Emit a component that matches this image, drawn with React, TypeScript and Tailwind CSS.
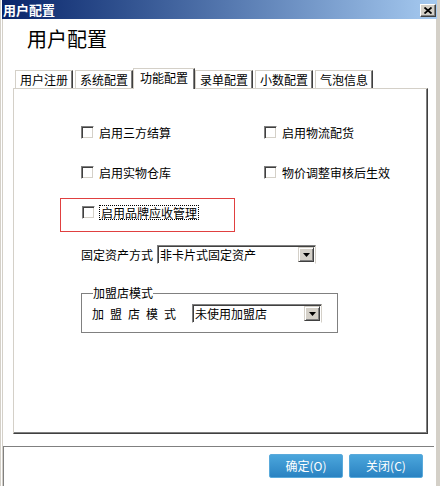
import React from "react";

function Box() {
  return (
    <span className="inline-block w-[13px] h-[13px] shrink-0 bg-white border border-t-[#808080] border-l-[#808080] border-b-white border-r-white shadow-[inset_1px_1px_0_#404040,inset_-1px_-1px_0_#d4d0c8]" />
  );
}

function Check({ label, focus }: { label: string; focus?: boolean }) {
  return (
    <div className="flex items-center h-[20px] gap-[4px]">
      <Box />
      <span
        className={
          focus
            ? "border border-dotted border-black px-[1px] leading-[13px]"
            : "px-[1px] leading-[13px]"
        }
      >
        {label}
      </span>
    </div>
  );
}

function Arrow() {
  return (
    <span className="ml-auto w-[16px] h-[15px] shrink-0 flex items-center justify-center bg-[#d4d0c8] border border-t-[#d4d0c8] border-l-[#d4d0c8] border-r-[#404040] border-b-[#404040] shadow-[inset_1px_1px_0_#ffffff,inset_-1px_-1px_0_#808080]">
      <svg width="7" height="4" viewBox="0 0 7 4">
        <polygon points="0,0 7,0 3.5,4" fill="#000" />
      </svg>
    </span>
  );
}

function Select({ text, wide }: { text: string; wide?: boolean }) {
  return (
    <div
      className={
        (wide ? "w-[159px] " : "w-[130px] ") +
        "h-[19px] flex items-center bg-white border border-t-[#808080] border-l-[#808080] border-b-white border-r-[#d4d0c8] shadow-[inset_1px_1px_0_#404040] pl-[2px] pr-[1px]"
      }
    >
      <span className="leading-[14px]">{text}</span>
      <Arrow />
    </div>
  );
}

function Tab({ label, active }: { label: string; active?: boolean }) {
  return (
    <div className="w-[60px] flex items-end">
      {active ? (
        <div className="relative z-10 -ml-[2px] -mb-[1px] w-[62px] h-[21px] bg-white border-t border-l border-[#d4d0c8] border-r border-r-[#404040] shadow-[inset_-1px_0_0_#808080] flex items-start justify-center pt-[1px]">
          <span className="leading-[16px]">{label}</span>
        </div>
      ) : (
        <div className="w-[58px] h-[18px] bg-white border-t border-l border-[#d4d0c8] border-r border-r-[#404040] shadow-[inset_-1px_0_0_#808080] flex items-center justify-center">
          <span className="leading-[14px]">{label}</span>
        </div>
      )}
    </div>
  );
}

export default function App() {
  return (
    <div className="w-[440px] h-[486px] bg-[#d4d0c8] flex text-[12px] text-black font-['Noto_Sans_CJK_SC','Noto_Sans',sans-serif] overflow-hidden">
      <div className="w-[1px] bg-[#d4d0c8]" />
      <div className="flex-1 flex flex-col border-l border-white pr-[3px]">
        {/* title bar */}
        <div className="h-[19px] shrink-0 bg-linear-to-r from-[#0a246a] to-[#a6caf0] flex items-center justify-between pl-[1px] pr-[1px]">
          <span className="text-white font-bold text-[13px] leading-none">用户配置</span>
          <span className="w-[16px] h-[13px] mt-[1px] flex items-center justify-center bg-[#d4d0c8] border border-t-white border-l-white border-r-[#404040] border-b-[#404040] shadow-[inset_-1px_-1px_0_#808080]">
            <svg width="8" height="7" viewBox="0 0 8 7">
              <path d="M0.5 0.5 L7.5 6.5 M7.5 0.5 L0.5 6.5" stroke="#000" strokeWidth="1.8" />
            </svg>
          </span>
        </div>
        {/* body */}
        <div className="flex-1 ml-[1px] mr-[1px] bg-white flex flex-col">
          <div className="pl-[24px] pt-[8px] text-[20px] leading-[24px]">用户配置</div>
          <div className="mt-[18px] h-[19px] pl-[12px] flex items-end">
            <Tab label="用户注册" />
            <Tab label="系统配置" />
            <Tab label="功能配置" active />
            <Tab label="录单配置" />
            <Tab label="小数配置" />
            <Tab label="气泡信息" />
          </div>
          <div className="ml-[10px] mr-[8px] h-[346px] border-t border-l border-[#d4d0c8] border-r border-b border-r-[#404040] border-b-[#404040] shadow-[inset_-1px_-1px_0_#808080] pl-[46px] pt-[33px] flex flex-col items-start">
            <div className="ml-[21px] grid grid-cols-[183px_auto] gap-y-[20px]">
              <Check label="启用三方结算" />
              <Check label="启用物流配货" />
              <Check label="启用实物仓库" />
              <Check label="物价调整审核后生效" />
            </div>
            <div className="mt-[16px] w-[175px] h-[34px] border border-[#e04040] pl-[21px] pt-[3px]">
              <Check label="启用品牌应收管理" focus />
            </div>
            <div className="mt-[13px] ml-[21px] flex items-center gap-[4px] h-[19px]">
              <span className="leading-[14px]">固定资产方式</span>
              <Select text="非卡片式固定资产" wide />
            </div>
            <fieldset className="mt-[22px] ml-[21px] w-[257px] border border-[#808080] pl-[10px] pb-[9px]">
              <legend className="ml-[1px] leading-[14px]">加盟店模式</legend>
              <div className="mt-[4px] flex items-center gap-[16px]">
                <div className="flex gap-[6px] leading-[14px]">
                  <span>加</span>
                  <span>盟</span>
                  <span>店</span>
                  <span>模</span>
                  <span>式</span>
                </div>
                <Select text="未使用加盟店" />
              </div>
            </fieldset>
          </div>
          <div className="mt-[12px] mr-[2px] flex-1 border-t border-l border-[#808080] flex justify-end items-start pt-[7px] pr-[11px] gap-[6px]">
            <button className="w-[74px] h-[24px] rounded-[2px] border border-[#5aaadb] bg-linear-to-b from-[#4ba6dc] to-[#2a83c2] text-white text-[12px] leading-none">
              确定(O)
            </button>
            <button className="w-[74px] h-[24px] rounded-[2px] border border-[#5aaadb] bg-linear-to-b from-[#4ba6dc] to-[#2a83c2] text-white text-[12px] leading-none">
              关闭(C)
            </button>
          </div>
        </div>
      </div>
    </div>
  );
}
